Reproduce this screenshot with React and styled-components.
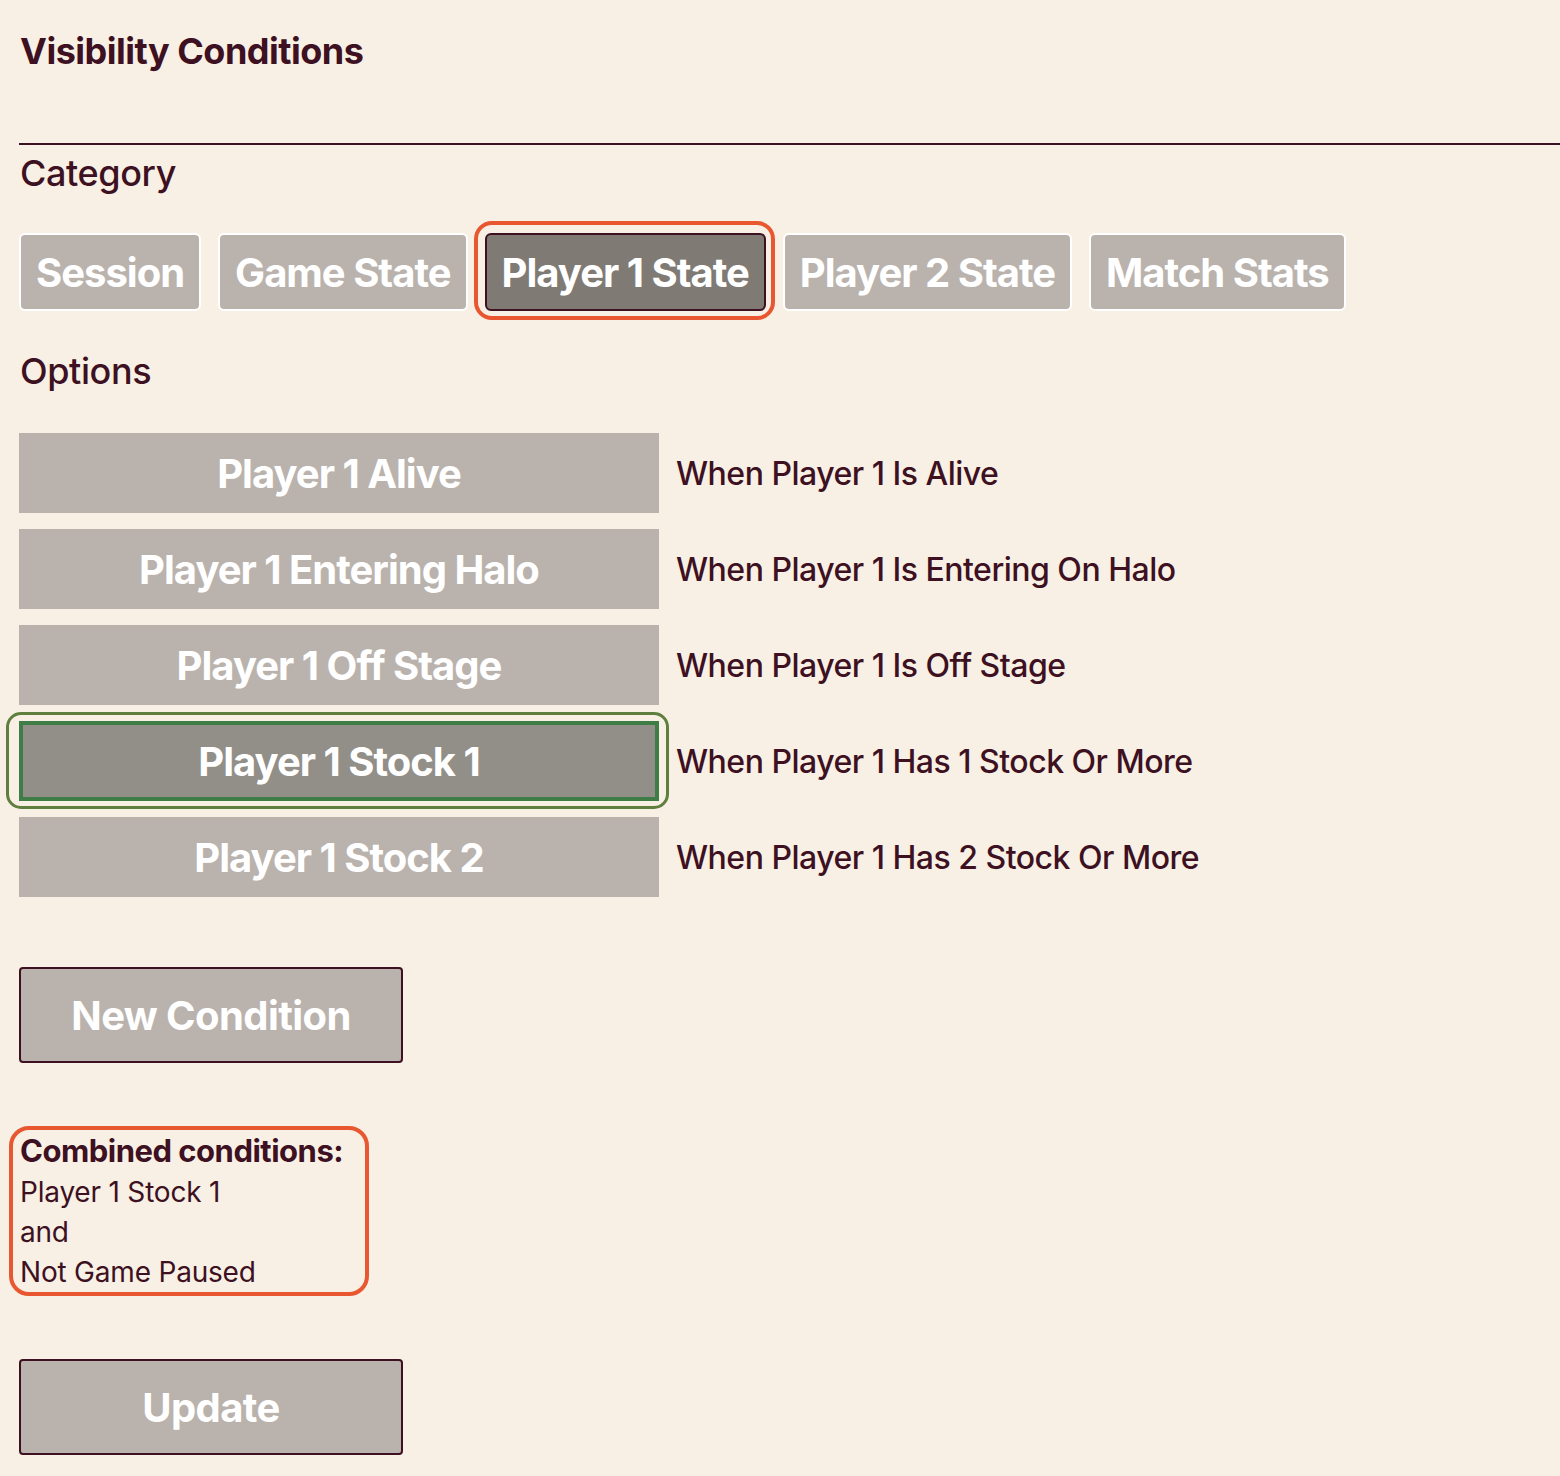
import React, { useState } from "react";
import styled, { createGlobalStyle } from "styled-components";

const GlobalStyle = createGlobalStyle`
  html, body {
    margin: 0;
    padding: 0;
    background: #f8f0e5;
  }
  body {
    font-family: Inter, "Liberation Sans", sans-serif;
    color: #3d1121;
  }
`;

const categories = ["Session", "Game State", "Player 1 State", "Player 2 State", "Match Stats"];

const options = [
  { name: "Player 1 Alive", text: "When Player 1 Is Alive" },
  { name: "Player 1 Entering Halo", text: "When Player 1 Is Entering On Halo" },
  { name: "Player 1 Off Stage", text: "When Player 1 Is Off Stage" },
  { name: "Player 1 Stock 1", text: "When Player 1 Has 1 Stock Or More" },
  { name: "Player 1 Stock 2", text: "When Player 1 Has 2 Stock Or More" },
];

export default function App() {
  const [category, setCategory] = useState("Player 1 State");
  const [option, setOption] = useState("Player 1 Stock 1");

  return (
    <Page>
      <GlobalStyle />
      <Title>Visibility Conditions</Title>
      <Rule />
      <Label>Category</Label>
      <CategoryBar>
        {categories.map((c) => (
          <CategoryButton key={c} $active={c === category} onClick={() => setCategory(c)}>
            {c}
          </CategoryButton>
        ))}
      </CategoryBar>
      <Label $top={38}>Options</Label>
      <OptionList>
        {options.map((o) => (
          <OptionRow key={o.name}>
            <OptionButton $active={o.name === option} onClick={() => setOption(o.name)}>
              {o.name}
            </OptionButton>
            <OptionText>{o.text}</OptionText>
          </OptionRow>
        ))}
      </OptionList>
      <ActionButton $top={70}>New Condition</ActionButton>
      <Combined>
        <CombinedTitle>Combined conditions:</CombinedTitle>
        <CombinedLine>Player 1 Stock 1</CombinedLine>
        <CombinedLine>and</CombinedLine>
        <CombinedLine>Not Game Paused</CombinedLine>
      </Combined>
      <ActionButton $top={63}>Update</ActionButton>
    </Page>
  );
}

const Page = styled.div`
  padding: 26px 0 24px 19px;
  overflow: hidden;
`;

const Title = styled.h1`
  margin: 0 0 0 1px;
  font-size: 36px;
  line-height: 50px;
  font-weight: 700;
  letter-spacing: -0.5px;
`;

const Rule = styled.div`
  height: 2px;
  background: #3d1121;
  margin-top: 67px;
`;

const Label = styled.div`
  margin-top: ${({ $top }) => $top || 6}px;
  margin-left: 1px;
  font-size: 36px;
  line-height: 44px;
  font-weight: 500;
  letter-spacing: -0.4px;
`;

const CategoryBar = styled.div`
  display: flex;
  gap: 17px;
  margin-top: 38px;
`;

const CategoryButton = styled.button`
  position: relative;
  box-sizing: border-box;
  height: 78px;
  padding: 0 15px;
  border-radius: 6px;
  border: 2px solid ${({ $active }) => ($active ? "#3d1121" : "#ffffff")};
  background: ${({ $active }) => ($active ? "#7f7a74" : "#bab3ad")};
  color: #ffffff;
  font-family: Inter, "Liberation Sans", sans-serif;
  font-size: 40px;
  font-weight: 700;
  letter-spacing: -1px;
  cursor: pointer;

  &::after {
    content: "";
    display: ${({ $active }) => ($active ? "block" : "none")};
    position: absolute;
    inset: -14px -11px -11px -13px;
    border: 4px solid #e8572f;
    border-radius: 18px;
    pointer-events: none;
  }
`;

const OptionList = styled.div`
  display: flex;
  flex-direction: column;
  gap: 16px;
  margin-top: 40px;
`;

const OptionRow = styled.div`
  display: flex;
  align-items: center;
  gap: 17px;
`;

const OptionButton = styled.button`
  position: relative;
  box-sizing: border-box;
  width: 640px;
  height: 80px;
  border: ${({ $active }) => ($active ? "4px solid #3f7d46" : "none")};
  border-radius: 0;
  background: ${({ $active }) => ($active ? "#928e88" : "#bab3ad")};
  color: #ffffff;
  font-family: Inter, "Liberation Sans", sans-serif;
  font-size: 40px;
  font-weight: 700;
  letter-spacing: -1px;
  cursor: pointer;

  &::after {
    content: "";
    display: ${({ $active }) => ($active ? "block" : "none")};
    position: absolute;
    inset: -13px -14px -12px -17px;
    border: 3px solid #5e7f3d;
    border-radius: 15px;
    pointer-events: none;
  }
`;

const OptionText = styled.span`
  font-size: 32px;
  font-weight: 500;
  letter-spacing: -0.5px;
`;

const ActionButton = styled.button`
  display: block;
  box-sizing: border-box;
  width: 384px;
  height: 96px;
  margin-top: ${({ $top }) => $top}px;
  border: 2px solid #3d1121;
  border-radius: 4px;
  background: #bab3ad;
  color: #ffffff;
  font-family: Inter, "Liberation Sans", sans-serif;
  font-size: 40px;
  font-weight: 700;
  letter-spacing: -0.6px;
  cursor: pointer;
`;

const Combined = styled.div`
  box-sizing: border-box;
  width: 360px;
  margin: 63px 0 0 -10px;
  padding: 0 0 0 7px;
  border: 4px solid #e8572f;
  border-radius: 20px;
  white-space: nowrap;
`;

const CombinedTitle = styled.div`
  font-size: 31px;
  line-height: 42px;
  font-weight: 700;
  letter-spacing: -0.5px;
`;

const CombinedLine = styled.div`
  font-size: 28px;
  line-height: 40px;
  font-weight: 400;
  letter-spacing: -0.2px;
`;
